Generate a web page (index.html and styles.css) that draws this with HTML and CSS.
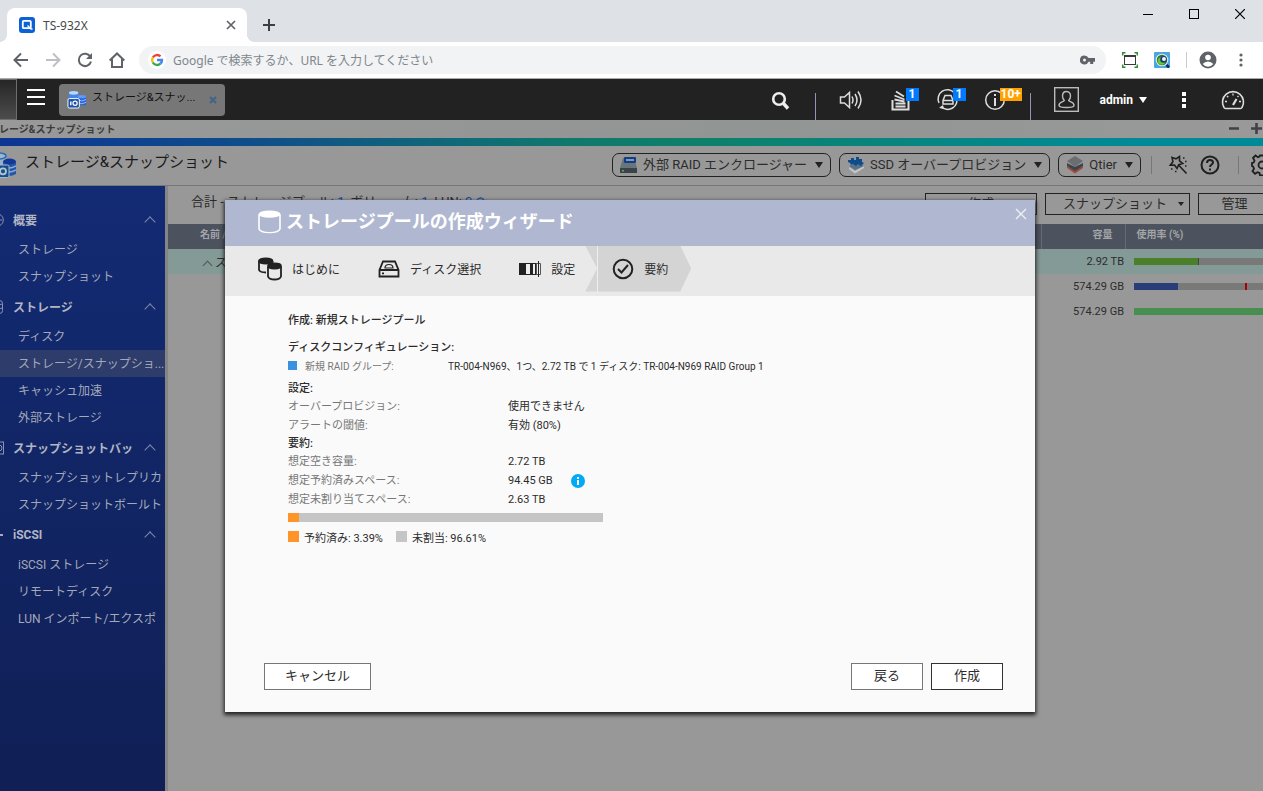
FILE: index.html
```html
<!DOCTYPE html>
<html lang="ja">
<head>
<meta charset="utf-8">
<title>TS-932X</title>
<link rel="stylesheet" href="styles.css">
</head>
<body>
<header class="browser">
  <div class="tabstrip">
    <div class="tab">
      <svg class="favicon" width="16" height="16" viewBox="0 0 16 16"><rect width="16" height="16" rx="3" fill="#0b62d6"/><rect x="3.800" y="3.800" width="8" height="7.400" rx="1" fill="none" stroke="#fff" stroke-width="1.800"/><path d="M8.500 8.500l3.500 3.500h1.500" fill="none" stroke="#fff" stroke-width="1.300"/></svg>
      <span class="tab-title">TS-932X</span>
      <button class="plain" aria-label="タブを閉じる"><svg width="10" height="10" viewBox="0 0 10 10"><path d="M1 1l8 8M9 1l-8 8" stroke="#5f6368" stroke-width="1.700"/></svg></button>
    </div>
    <button class="plain newtab" aria-label="新しいタブ"><svg width="12" height="12" viewBox="0 0 12 12"><path d="M6 0v12M0 6h12" stroke="#3c4043" stroke-width="2"/></svg></button>
    <div class="winctl">
      <button class="plain" aria-label="最小化"><svg width="10" height="10" viewBox="0 0 10 10"><path d="M0 5.500h10" stroke="#000"/></svg></button>
      <button class="plain" aria-label="最大化"><svg width="10" height="10" viewBox="0 0 10 10"><rect x=".5" y=".5" width="9" height="9" fill="none" stroke="#000"/></svg></button>
      <button class="plain" aria-label="閉じる"><svg width="10" height="10" viewBox="0 0 10 10"><path d="M0 0l10 10M10 0L0 10" stroke="#000" stroke-width="1.200"/></svg></button>
    </div>
  </div>
  <div class="toolbar">
    <button class="plain" aria-label="戻る"><svg width="16" height="16" viewBox="0 0 16 16" fill="none" stroke="#5f6368" stroke-width="2"><path d="M15 8H2M8 1.500L1.500 8 8 14.500"/></svg></button>
    <button class="plain" aria-label="進む"><svg width="16" height="16" viewBox="0 0 16 16" fill="none" stroke="#bdbfc2" stroke-width="2"><path d="M1 8h13M8 1.500L14.500 8 8 14.500"/></svg></button>
    <button class="plain" aria-label="再読み込み"><svg width="16" height="16" viewBox="0 0 16 16"><path d="M13.500 5A6.200 6.200 0 1 0 14 9.500" fill="none" stroke="#5f6368" stroke-width="2"/><path d="M15 1v6H9z" fill="#5f6368"/></svg></button>
    <button class="plain" aria-label="ホーム"><svg width="16" height="16" viewBox="0 0 16 16" fill="none" stroke="#5f6368" stroke-width="2"><path d="M.700 8.500L8 1.500l7.300 7M3 7v8h10V7"/></svg></button>
    <div class="omnibox">
      <svg width="18" height="18" viewBox="0 0 18 18"><circle cx="9" cy="9" r="9" fill="#fff"/><g fill="none" stroke-width="2.400"><path d="M4.800 6.500A5 5 0 0 1 12.500 5.400" stroke="#ea4335"/><path d="M4.800 6.500a5 5 0 0 0 0 5" stroke="#fbbc05"/><path d="M4.800 11.500a5 5 0 0 0 7.600 1.200" stroke="#34a853"/><path d="M9 9h5a5 5 0 0 1-1.600 3.700" stroke="#4285f4"/></g></svg>
      <input type="text" aria-label="アドレスバー" placeholder="Google で検索するか、URL を入力してください">
      <svg width="16" height="10" viewBox="0 0 16 10"><path fill-rule="evenodd" d="M4.500.500a4.500 4.500 0 1 0 4 6.300h1.700V9h3V6.800H15V3H8.500a4.500 4.500 0 0 0-4-2.500zm0 3a1.500 1.500 0 1 1 0 3 1.500 1.500 0 0 1 0-3z" fill="#5f6368"/></svg>
    </div>
    <svg class="ext" width="16" height="16" viewBox="0 0 16 16" fill="none"><path d="M.500 3.500v-3h3M12.500.500h3v3M15.500 12.500v3h-3M3.500 15.500h-3v-3" stroke="#2e8b2e" stroke-width="1.800"/><rect x="2.500" y="4.500" width="11" height="8" stroke="#3a3a3a"/><path d="M2 4h12" stroke="#3a3a3a" stroke-width="2"/></svg>
    <svg class="ext" width="16" height="16" viewBox="0 0 16 16"><rect width="16" height="16" rx="1" fill="#4aa6e2"/><circle cx="8" cy="8" r="6.300" fill="#dcebf0"/><circle cx="8" cy="8" r="5.200" fill="#356a35"/><circle cx="7.500" cy="9" r="3.800" fill="#6cc832"/><circle cx="9.500" cy="7.500" r="3.300" fill="#173c73"/><circle cx="10" cy="7" r="2" fill="#e8f4ff"/><path d="M12.500 13l2.500 2.500" stroke="#102a66" stroke-width="2.500"/></svg>
    <i class="tsep"></i>
    <svg width="18" height="18" viewBox="0 0 18 18"><circle cx="9" cy="9" r="8.500" fill="#5f6368"/><circle cx="9" cy="6.500" r="2.800" fill="#fff"/><path d="M3.700 13q2-2.500 5.300-2.500t5.300 2.500Q12 15.700 9 15.700T3.700 13z" fill="#fff"/></svg>
    <button class="plain kebab" aria-label="メニュー"><svg width="4" height="14" viewBox="0 0 4 14" fill="#5f6368"><circle cx="2" cy="2" r="1.600"/><circle cx="2" cy="7" r="1.600"/><circle cx="2" cy="12" r="1.600"/></svg></button>
  </div>
</header>

<nav class="qbar">
  <div class="tile"></div>
  <button class="plain burger" aria-label="メインメニュー"><svg width="18" height="16" viewBox="0 0 18 16"><path d="M0 1h18M0 8h18M0 15h18" stroke="#fff" stroke-width="2"/></svg></button>
  <div class="task">
    <svg width="19" height="19" viewBox="0 0 20 20"><path d="M2 3v7h10V3z" fill="#3f86ec"/><ellipse cx="7" cy="3" rx="5" ry="2" fill="#b6d6ff"/><path d="M11 7v9h9V7z" fill="#2c62d8"/><ellipse cx="15.500" cy="7" rx="4.500" ry="1.800" fill="#5b9bff"/><path d="M11 10q4.500 3 9 0M11 13q4.500 3 9 0" stroke="#9cc4ff" fill="none"/><rect x="1" y="9" width="12" height="10" rx="1.500" fill="#1c52a8" stroke="#fff"/><circle cx="8.500" cy="14" r="2.200" fill="none" stroke="#fff" stroke-width="1.300"/><path d="M4 12v4" stroke="#fff" stroke-width="1.500"/></svg>
    <span class="task-name">ストレージ&amp;スナッ...</span>
    <button class="plain" aria-label="タスクを閉じる"><svg width="8" height="8" viewBox="0 0 8 8"><path d="M1 1l6 6M7 1L1 7" stroke="#3d6489" stroke-width="2"/></svg></button>
  </div>
  <div class="tray">
    <button class="plain" aria-label="検索"><svg width="24" height="24" viewBox="0 0 24 24" fill="none" stroke="#eee"><circle cx="11" cy="11" r="5.800" stroke-width="2.600"/><path d="M15.500 15.500l4.500 5" stroke-width="3.400"/></svg></button>
    <i class="qsep"></i>
    <button class="plain sound" aria-label="音量"><svg width="24" height="24" viewBox="0 0 24 24" fill="none" stroke="#ddd" stroke-width="1.500"><path d="M1.500 9v6h4l5 4.500v-15L5.500 9zM13 8.500q2 3.500 0 7M16 6q4 6 0 12M19 3.500q6 8.500 0 17"/></svg></button>
    <button class="plain badged" aria-label="バックグラウンドタスク"><svg width="24" height="24" viewBox="0 0 24 24" fill="none" stroke="#ddd"><path d="M3.500 12v9.500h16V12" stroke-width="2"/><path d="M6.500 18.500h10M6.500 15.500h10M5.500 11.500l10 2M5.500 7.500l10 4M7 3.500l8 5" stroke-width="1.800"/></svg><b class="badge">1</b></button>
    <button class="plain badged" aria-label="外部デバイス"><svg width="24" height="24" viewBox="0 0 24 24" fill="none" stroke="#ddd" stroke-width="1.500"><path d="M3 15A9.300 9.300 0 0 1 18.500 5M20.500 9A9.300 9.300 0 0 1 5 18.500"/><path d="M9 7.500h6l2 5v3.500H7v-3.500zM7 12.500h10"/><path d="M3 20l4-3 1 4z" fill="#ddd" stroke="none"/></svg><b class="badge">1</b></button>
    <button class="plain badged" aria-label="イベント通知"><svg width="24" height="24" viewBox="0 0 24 24" fill="none" stroke="#ddd"><circle cx="12" cy="12" r="9.300" stroke-width="1.500"/><path d="M12 10v8M12 6v2" stroke-width="2"/></svg><b class="badge warn">10+</b></button>
    <i class="qsep"></i>
    <button class="plain" aria-label="アカウント"><svg width="25" height="25" viewBox="0 0 25 25" fill="none" stroke="#bbb" stroke-width="1.400"><rect x=".7" y=".7" width="23.600" height="23.600"/><path d="M12.500 4.500c-3 0-4 2-4 4.500 0 2 .8 3.500 1.800 4.500-1 2-5.300 1-5.300 5 0 1.500 3 2 7.500 2s7.500-.5 7.500-2c0-4-4.300-3-5.300-5 1-1 1.800-2.500 1.800-4.500 0-2.500-1-4.500-4-4.500z"/></svg></button>
    <button class="plain admin">admin<svg width="8" height="6" viewBox="0 0 8 6"><path d="M0 0h8L4 6z" fill="#fff"/></svg></button>
    <button class="plain more" aria-label="その他"><svg width="4" height="16" viewBox="0 0 4 16"><path d="M0 0h4v4H0zM0 6h4v4H0zM0 12h4v4H0z" fill="#fff"/></svg></button>
    <button class="plain gauge" aria-label="ダッシュボード"><svg width="24" height="24" viewBox="0 0 24 24" fill="none" stroke="#ddd" stroke-width="1.600"><path d="M3 19.500A10.500 10.500 0 1 1 21 19.500q-.5 1-1.500 1h-15q-1 0-1.500-1z"/><path d="M12 17l3.500-6" stroke-width="2.200"/><path d="M12 5.500v2M6 8l1.300 1.300M4 13.500h2M18 13.500h2M17.500 8l-1 1" stroke-width="1.300"/></svg></button>
  </div>
</nav>

<main class="desktop">
  <div class="titlebar"><span class="cut">レージ&amp;スナップショット</span>
    <svg width="36" height="11" viewBox="0 0 36 11"><path d="M1 5.500h10M23 5.500h11M28.500 0v11" stroke="#3f4246" stroke-width="2.600"/></svg>
  </div>
  <div class="rainbow"></div>
  <div class="apphead">
    <svg class="applogo" width="26" height="26" viewBox="0 0 26 26"><path d="M0 4v9h16V4z" fill="#9bb0c8"/><ellipse cx="8" cy="4" rx="8" ry="3" fill="#a6b6c6" stroke="#2570b8" stroke-width="1.500"/><path d="M13 10v12q6 4 13 0V10z" fill="#2556a6"/><path d="M13 14q6 4 13 0M13 18q6 4 13 0" stroke="#8aa9d8" stroke-width="1.500" fill="none"/><ellipse cx="19.500" cy="9.500" rx="6.500" ry="3" fill="#14389a"/><rect x="0" y="13" width="19" height="12.500" rx="1.500" fill="#14508c" stroke="#a9b7c6"/><circle cx="13" cy="19.300" r="3" fill="none" stroke="#b6c2ce" stroke-width="1.800"/></svg>
    <h1>ストレージ&amp;スナップショット</h1>
    <div class="pills">
      <button class="pill"><svg width="18" height="18" viewBox="0 0 18 18"><path d="M3 2h11l3 10H0z" fill="#6a747c"/><rect x="4" y="1" width="12" height="6" rx="1" fill="#123f80"/><path d="M6 4h8" stroke="#a4b6cc" stroke-width="1.500"/><path d="M0 12h17v5H0z" fill="#3b434a"/><rect x="2" y="14" width="2" height="1.500" fill="#5cae35"/></svg>外部 RAID エンクロージャー<i class="tri"></i></button>
      <button class="pill"><svg width="18" height="18" viewBox="0 0 18 18"><path d="M2 11l6 4 9-5v2l-9 5.500L2 13z" fill="#c2c7cb"/><path d="M2 10l6 4 9-4-8-3z" fill="#5c7186"/><path d="M1 4h3V2h3v2h2V1h3v2h3v3l2 1-3 3-3-2-2 2-3-2-2 1-1-2-2-1z" fill="#0e4c8e"/></svg>SSD オーバープロビジョン<i class="tri"></i></button>
      <button class="pill"><svg width="18" height="18" viewBox="0 0 18 18"><path d="M1 10l8 4 8-4v2l-8 5.500L1 12z" fill="#a34a3c"/><path d="M1 7l8 4 8-4v3l-8 5-8-5z" fill="#3e444d"/><path d="M9 0l8 5-8 6L1 5z" fill="#6b6e71"/></svg>Qtier<i class="tri"></i></button>
      <i class="hsep"></i>
      <button class="plain dim" aria-label="ウィザード"><svg width="20" height="20" viewBox="0 0 20 20" fill="none" stroke="#1f1f1f" stroke-width="1.600"><path d="M4 2.500l4 1.300 3.500-2.300v4.300l3.200 2.700-4 1.200L9 13.500 6.500 10l-4.200.200 2.600-3.500zM11 10.500l7.500 8"/><path d="M3 14h1.500M7 16.500h1.500M15 3h1.500M17 6.500h1.500M17 11h1.500" stroke-width="1.500"/></svg></button>
      <button class="plain dim" aria-label="ヘルプ"><svg width="20" height="20" viewBox="0 0 20 20" fill="none" stroke="#1f1f1f" stroke-width="2"><circle cx="10" cy="10" r="8.500"/><path d="M7 8q0-3 3-3t3 2.500c0 2-3 2-3 4.500M10 13.500v2"/></svg></button>
      <i class="hsep wide"></i>
      <button class="plain dim" aria-label="設定"><svg width="22" height="22" viewBox="0 0 22 22" fill="none" stroke="#1f1f1f" stroke-width="1.800"><path d="M9 1.500h4l.5 3 2 .8 2.500-1.700 2.500 2.700-1.700 2.500.8 2 .4.400v3l-1.200 1 1.500 2.300-2.600 2.500-2.500-1.500-1.700.700-.5 2.300H9l-.5-2.500-2-.8-2.500 1.600-2.500-2.600 1.500-2.500-.8-2L1 12V9l1.700-.500.8-2L2 4l2.500-2.500 2.500 1.700 1.500-.6z"/><circle cx="11" cy="11" r="3.500"/></svg></button>
    </div>
  </div>
  <div class="cols">
    <nav class="side">
      <h2><svg width="14" height="14" viewBox="0 0 14 14" fill="none" stroke="#8b94b4"><circle cx="7" cy="7" r="6.300"/><path d="M7 7h5"/></svg><span>概要</span><i class="up"></i></h2>
      <a href="#">ストレージ</a>
      <a href="#">スナップショット</a>
      <h2><svg width="14" height="14" viewBox="0 0 14 14" fill="none" stroke="#8b94b4"><rect x=".5" y=".5" width="12" height="13" rx="3"/><path d="M1 4q6 3 11 0M1 8q6 3 11 0"/></svg><span>ストレージ</span><i class="up"></i></h2>
      <a href="#">ディスク</a>
      <a href="#" class="on">ストレージ/スナップショ...</a>
      <a href="#">キャッシュ加速</a>
      <a href="#">外部ストレージ</a>
      <h2><svg width="14" height="14" viewBox="0 0 14 14" fill="none" stroke="#8b94b4"><rect x=".5" y="1" width="13" height="12"/><circle cx="9" cy="7" r="3"/></svg><span>スナップショットバッ</span><i class="up"></i></h2>
      <a href="#">スナップショットレプリカ</a>
      <a href="#">スナップショットボールト</a>
      <h2><svg width="14" height="14" viewBox="0 0 14 14" stroke="#a5abc0" stroke-width="2"><path d="M4 7h9"/></svg><span>iSCSI</span><i class="up"></i></h2>
      <a href="#">iSCSI ストレージ</a>
      <a href="#">リモートディスク</a>
      <a href="#">LUN インポート/エクスポ</a>
    </nav>
    <section class="pane">
      <div class="summary">
        <p>合計 - ストレージプール: <em>1</em>, ボリューム: <em>1</em>, LUN: <em>0</em> <em>⟳</em></p>
        <div class="acts">
          <button class="act create">作成</button>
          <button class="act snap">スナップショット<i class="tri sm"></i></button>
          <button class="act manage">管理</button>
        </div>
      </div>
      <table>
        <thead><tr><th class="c-name">名前 /</th><th class="c-cap">容量</th><th class="c-use">使用率 (%)</th></tr></thead>
        <tbody>
          <tr class="sel"><td class="c-name"><i class="up sm"></i>ストレージプール 1</td><td class="c-cap">2.92 TB</td><td class="c-use"><div class="bar"><i class="green" style="width:50%"></i></div></td></tr>
          <tr><td class="c-name"></td><td class="c-cap">574.29 GB</td><td class="c-use"><div class="bar"><i class="blue" style="width:34%"></i><i class="gap" style="width:52%"></i><i class="red"></i></div></td></tr>
          <tr><td class="c-name"></td><td class="c-cap">574.29 GB</td><td class="c-use"><div class="bar"><i class="mint" style="width:100%"></i></div></td></tr>
        </tbody>
      </table>
    </section>
  </div>

  <div class="overlay">
    <section class="modal" role="dialog" aria-labelledby="wiz">
      <header class="mhead">
        <svg width="23" height="24" viewBox="0 0 23 26" preserveAspectRatio="none"><path d="M1 4.500v16q1 4 10.500 4T22 20.500v-16" fill="none" stroke="#fff" stroke-width="1.600"/><ellipse cx="11.500" cy="4.500" rx="11" ry="4" fill="#fff"/></svg>
        <h2 id="wiz">ストレージプールの作成ウィザード</h2>
        <button class="plain mclose" aria-label="ウィザードを閉じる"><svg width="12" height="12" viewBox="0 0 12 12"><path d="M1 1l10 10M11 1L1 11" stroke="#eef0f6" stroke-width="1.300"/></svg></button>
      </header>
      <ol class="steps">
        <li><svg width="24" height="24" viewBox="0 0 24 24" fill="none" stroke="#222" stroke-width="1.800"><path d="M1 4v9q1 2.500 7 2.500M14.500 4v3"/><ellipse cx="7.700" cy="4" rx="6.800" ry="2.600" fill="#222"/><path d="M10 9.500v10q1 3 6.500 3t6.500-3v-10" fill="#e9e9e9"/><ellipse cx="16.500" cy="9" rx="6.500" ry="2.500" fill="#222"/></svg>はじめに</li>
        <li><svg width="22" height="18" viewBox="0 0 22 18" fill="none" stroke="#222" stroke-width="1.800"><path d="M5 1.500h12L20.500 10v6.500h-19V10zM1.500 10h19"/><path d="M7 8q0-3.500 4-3.500T15 8z" stroke-width="1.200"/><path d="M4 13.300h2"/></svg>ディスク選択</li>
        <li><svg width="22" height="16" viewBox="0 0 22 16"><path d="M0 2h19v12H0z" fill="#222"/><path d="M7 3h4v10H7zM14 3h2v10h-2z" fill="#eee"/><path d="M17.500 2.500h4v11h-4z" fill="#eee" stroke="#555"/><path d="M19.500 0v16" stroke="#222"/></svg>設定</li>
        <li class="now"><svg width="22" height="22" viewBox="0 0 22 22" fill="none" stroke="#222" stroke-width="2"><circle cx="11" cy="11" r="9.300"/><path d="M6 11l3.500 3.500L16 7"/></svg>要約</li>
      </ol>
      <div class="mbody">
        <h3 class="first">作成: 新規ストレージプール</h3>
        <h3>ディスクコンフィギュレーション:</h3>
        <div class="raid"><i class="sq b"></i><span class="k">新規 RAID グループ:</span><span>TR-004-N969、1つ、2.72 TB で 1 ディスク: TR-004-N969 RAID Group 1</span></div>
        <h3>設定:</h3>
        <dl>
          <dt>オーバープロビジョン:</dt><dd>使用できません</dd>
          <dt>アラートの閾値:</dt><dd>有効 (80%)</dd>
        </dl>
        <h3>要約:</h3>
        <dl>
          <dt>想定空き容量:</dt><dd>2.72 TB</dd>
          <dt>想定予約済みスペース:</dt><dd>94.45 GB <svg width="14" height="14" viewBox="0 0 14 14"><circle cx="7" cy="7" r="7" fill="#00aaf5"/><path d="M7 6v5M7 3v2" stroke="#fff" stroke-width="2"/></svg></dd>
          <dt>想定未割り当てスペース:</dt><dd>2.63 TB</dd>
        </dl>
        <div class="alloc"><i style="width:3.39%"></i></div>
        <div class="legend"><i class="sq o"></i>予約済み: 3.39%<i class="sq g"></i>未割当: 96.61%</div>
      </div>
      <footer class="mfoot">
        <button class="mb cancel">キャンセル</button>
        <button class="mb">戻る</button>
        <button class="mb primary">作成</button>
      </footer>
    </section>
  </div>
</main>
</body>
</html>
```
FILE: styles.css
```css
* { box-sizing: border-box; }
body {
  margin: 0; height: 100vh; overflow: hidden;
  display: flex; flex-direction: column;
  font-family: Roboto, "Noto Sans CJK JP", sans-serif;
  font-size: 12px; color: #2c2c2c;
}
button, input { font: inherit; color: inherit; }
h1, h2, h3, p, dl, dd, ol { margin: 0; padding: 0; }
svg { display: block; flex: none; }
i { font-style: normal; }
.plain { border: 0; background: none; padding: 0; display: flex; align-items: center; justify-content: center; }

/* browser chrome */
.browser { font-family: "Noto Sans", "Noto Sans CJK JP", sans-serif; border-bottom: 1px solid #a9a9a9; }
.tabstrip { height: 42px; background: #dee1e6; display: flex; padding: 8px 18px 0 7px; }
.tab { width: 240px; background: #fff; border-radius: 8px 8px 0 0; display: flex; align-items: center; padding: 0 11px 0 12px; gap: 8px; position: relative; }
.tab::before, .tab::after { content: ""; position: absolute; bottom: 0; width: 8px; height: 8px; }
.tab::before { left: -8px; background: radial-gradient(circle at 0 0, #dee1e6 8px, #fff 8px); }
.tab::after { right: -8px; background: radial-gradient(circle at 100% 0, #dee1e6 8px, #fff 8px); }
.tab-title { flex: 1; color: #45494d; }
.newtab { margin-left: 16px; }
.winctl { margin-left: auto; display: flex; gap: 36px; align-items: flex-start; padding-top: 1px; }
.toolbar { height: 36px; background: #fff; display: flex; align-items: center; padding: 0 20px 0 13px; gap: 16px; }
.omnibox { flex: 1; height: 28px; border-radius: 14px; background: #f1f3f4; display: flex; align-items: center; padding: 0 10px 0 9px; gap: 7px; margin-left: -2px; }
.omnibox input { flex: 1; min-width: 0; border: 0; background: none; padding: 0; outline: 0; }
.omnibox input::placeholder { color: #80868b; opacity: 1; }
.tsep { width: 1px; height: 16px; background: #c8cacd; margin-right: -4px; }
.kebab { margin-left: 6px; }

/* system bar */
.qbar { height: 41px; background: #222; display: flex; align-items: center; color: #fff; }
.tile { width: 17px; align-self: stretch; background: linear-gradient(#262626, #4c4c4c); border: solid #6d6d6d; border-width: 1px 1px 1px 0; }
.burger { margin: 0 14px 5px 10px; }
.task { width: 166px; height: 32px; border-radius: 4px; background: #777; display: flex; align-items: center; gap: 6px; padding: 0 8px; }
.task-name { flex: 1; font-size: 11px; line-height: 16px; padding-bottom: 3px; color: #111; white-space: nowrap; }
.tray { margin-left: auto; align-self: stretch; display: flex; align-items: center; padding-right: 18px; gap: 23px; }
.qsep { width: 1px; align-self: flex-end; height: 27px; background: #9593b5; }
.sound { margin-right: 3px; }
.badged { position: relative; }
.badge { position: absolute; left: 17px; top: 0; height: 13px; min-width: 13px; padding: 0 3px; background: #007bff; font-size: 12px; line-height: 13px; }
.warn { background: #ffa200; padding: 0 1px; }
.admin { font-weight: bold; gap: 6px; margin-left: -2px; }
.more { margin: 0 12px; }

/* storage application */
.desktop { flex: 1; min-height: 0; display: flex; flex-direction: column; position: relative; background: #989898; overflow: hidden; }
.titlebar { height: 18px; padding-bottom: 2px; background: linear-gradient(100deg, #999, #919594 60%, #999); display: flex; align-items: center; justify-content: space-between; font-size: 10px; font-weight: bold; color: #3b3b3b; }
.titlebar .cut { margin-left: -1px; }
.titlebar svg { margin-right: -1px; }
.rainbow { height: 8px; background: linear-gradient(90deg, #0d3594, #0f4e8a 20%, #10786d 45%, #0e806a 55%, #008a97 90%); }
.apphead { height: 40px; flex: none; border-bottom: 1px solid #777; padding-bottom: 1px; display: flex; align-items: center; justify-content: space-between; }
.applogo { margin-left: -10px; margin-right: 9px; }
.apphead h1 { flex: 1; font-size: 15px; font-weight: 400; line-height: 20px; padding-bottom: 6px; color: #1a1a1a; white-space: nowrap; }
.pills { display: flex; align-items: center; gap: 8px; margin-right: -14px; }
.pill { height: 24px; border: 1px solid #222; border-radius: 7px; background: none; display: flex; align-items: center; gap: 5px; padding: 0 7px; font-size: 13px; line-height: 20px; white-space: nowrap; }
.tri { border: 4px solid transparent; border-top: 6px solid #222; border-bottom: 0; margin-left: 3px; }
.tri.sm { border-width: 4px 3px 0; margin-left: 0; }
.hsep { width: 1px; height: 18px; background: #777; margin: 0 8px 0 2px; }
.hsep.wide { margin: 0 4px 0 6px; }
.dim { margin-right: 4px; }
.cols { flex: 1; min-height: 0; display: flex; }
.side { width: 168px; flex: none; padding-top: 17px; border-right: 3px solid #858585; background: linear-gradient(#132b74, #101f55); color: #a4a9b9; overflow: hidden; }
.side h2 { height: 33px; font-size: 12px; font-weight: bold; display: flex; align-items: center; padding-right: 9px; margin-left: -10px; color: #b2b6c3; }
.side h2 svg { margin-right: 9px; }
.side h2 span { flex: 1; white-space: nowrap; }
.side a { display: block; height: 27px; line-height: 28px; padding-left: 18px; color: inherit; text-decoration: none; white-space: nowrap; }
.side a.on { background: #2e3c6b; }
.up { width: 8px; height: 8px; border: solid #7d88ad; border-width: 1px 0 0 1px; transform: rotate(45deg); margin: 5px 2px 0 6px; flex: none; }
.pane { flex: 1; min-width: 0; }
.summary { height: 38px; display: flex; align-items: center; justify-content: space-between; padding-left: 23px; }
.summary p { font-size: 13px; line-height: 20px; padding-bottom: 6px; white-space: nowrap; }
.summary em { font-style: normal; color: #0e4da0; }
.acts { display: flex; gap: 8px; margin-right: -8px; padding-bottom: 3px; }
.act { height: 22px; line-height: 20px; font-size: 13px; border: 1px solid #222; background: none; padding: 0; white-space: nowrap; }
.create { width: 112px; }
.snap { width: 145px; display: flex; align-items: center; justify-content: space-between; padding: 0 5px 0 17px; }
.manage { width: 73px; }
table { width: 100%; border-collapse: collapse; table-layout: fixed; }
th { background: #4d535e; color: #a3a5a9; font-size: 10px; height: 25px; padding: 0 0 6px; border-left: 1px solid #646b78; }
td { height: 25px; padding: 0; }
.sel td { background: #839a97; }
.c-name { text-align: left; padding-left: 32px; border-left: 0; white-space: nowrap; }
.c-cap { width: 84px; text-align: right; }
td.c-cap { font-size: 11px; padding-right: 1px; }
th.c-cap { padding-right: 12px; }
.c-use { width: 138px; text-align: left; padding-left: 9px; }
th.c-use { padding-left: 11px; }
.up.sm { display: inline-block; width: 7px; height: 7px; border-color: #555; margin: 0 4px -2px; }
.bar { height: 7px; background: #797979; display: flex; }
.green { background: #4c7f2a; border-right: 1px solid #444; }
.blue { background: #293d78; }
.red { width: 2px; background: #a00; }
.mint { background: #468f51; }

/* wizard */
.overlay { position: absolute; inset: 0; display: flex; align-items: center; justify-content: center; padding-right: 3px; }
.modal { width: 810px; max-width: 95%; background: #fafafa; box-shadow: 0 2px 4px 1px #222; display: flex; flex-direction: column; position: relative; }
.mhead { height: 46px; background: #b0b8d1; color: #fff; display: flex; align-items: center; gap: 5px; padding: 0 33px 1px; }
.mhead h2 { font-size: 18px; line-height: 26px; }
.mclose { position: absolute; right: 8px; top: 8px; }
.steps { height: 50px; background: #e9e9e9; display: flex; list-style: none; padding-left: 33px; }
.steps li { height: 46px; display: flex; align-items: center; gap: 10px; margin-right: 38px; white-space: nowrap; }
.steps li:nth-child(2) { margin-right: 38px; }
.steps li:nth-child(3) { margin-right: 10px; }
.steps .now { position: relative; background: linear-gradient(90deg, #d5d5d5 12px, #eee 12px, #eee 13px, #d4d4d4 13px); clip-path: polygon(0 0, 95px 0, 100% 50%, 95px 100%, 0 100%, 12px 50%); padding: 0 23px 0 27px; margin: 0; }
.mbody { padding: 16px 63px 0; font-size: 11px; }
.mbody h3 { font-size: 11px; font-weight: 500; height: 18px; line-height: 18px; }
.mbody h3.first { margin-bottom: 9px; }
.raid { height: 23px; padding-bottom: 6px; display: flex; align-items: center; font-size: 10px; }
.raid .k { width: 143px; }
.k, dt { color: #777; }
.sq { width: 11px; height: 11px; flex: none; margin-right: 5px; }
.sq.b { width: 9px; height: 9px; background: #3a91e0; margin-right: 8px; }
.sq.o { background: #ff9428; }
.sq.g { background: #c5c5c5; margin-left: 13px; }
dl { display: grid; grid-template-columns: 220px 1fr; grid-auto-rows: 18px; line-height: 18px; row-gap: 1px; }
dd { display: flex; align-items: center; gap: 18px; }
.alloc { width: 315px; height: 9px; background: #c5c5c5; margin-top: 4px; }
.alloc i { display: block; height: 9px; background: #ff9428; }
.legend { display: flex; align-items: center; height: 20px; margin-top: 5px; }
.mfoot { display: flex; gap: 8px; padding: 116px 32px 22px 39px; }
.mb { width: 72px; height: 27px; line-height: 20px; background: #fff; border: 1px solid #777; padding: 0; font-size: 13px; }
.mb.cancel { width: 107px; margin-right: auto; }
.mb.primary { border-color: #333; }
```
